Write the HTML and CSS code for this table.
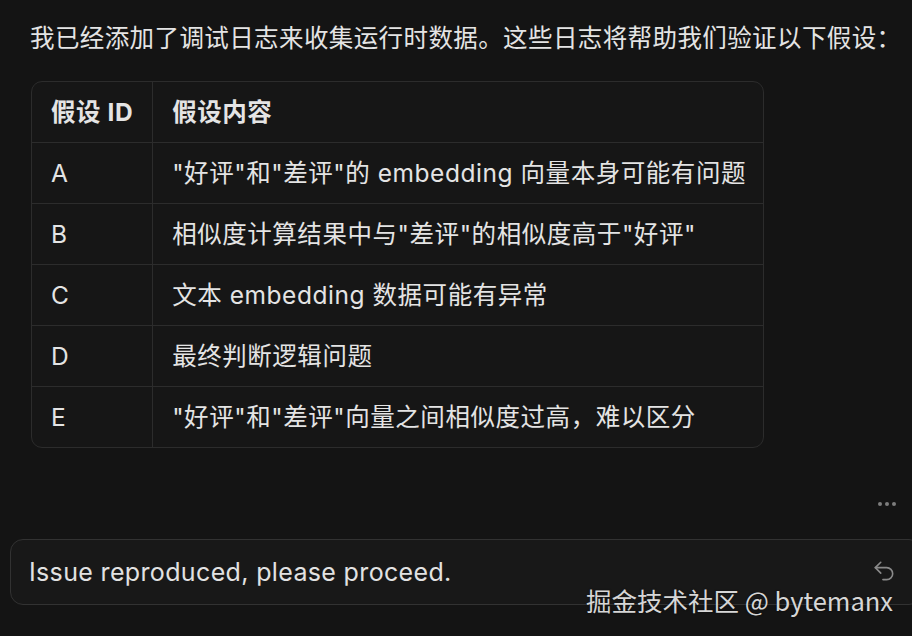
FILE: index.html
```html
<!DOCTYPE html>
<html lang="zh-CN">
<head>
<meta charset="utf-8">
<title>调试日志</title>
<link rel="stylesheet" href="styles.css">
</head>
<body>
<main class="chat">
  <p class="intro">我已经添加了调试日志来收集运行时数据。这些日志将帮助我们验证以下假设：</p>
  <div class="table-wrap">
    <table class="hyp">
      <thead>
        <tr><th class="c-id">假设 ID</th><th class="c-txt">假设内容</th></tr>
      </thead>
      <tbody>
        <tr><td class="c-id">A</td><td class="c-txt">"好评"和"差评"的 embedding 向量本身可能有问题</td></tr>
        <tr><td class="c-id">B</td><td class="c-txt">相似度计算结果中与"差评"的相似度高于"好评"</td></tr>
        <tr><td class="c-id">C</td><td class="c-txt">文本 embedding 数据可能有异常</td></tr>
        <tr><td class="c-id">D</td><td class="c-txt">最终判断逻辑问题</td></tr>
        <tr><td class="c-id">E</td><td class="c-txt">"好评"和"差评"向量之间相似度过高，难以区分</td></tr>
      </tbody>
    </table>
  </div>
  <div class="more"><span class="dot"></span><span class="dot"></span><span class="dot"></span></div>
  <div class="composer">
    <span class="composer-text">Issue reproduced, please proceed.</span>
    <svg class="undo" viewBox="0 0 24 24" width="26" height="26" fill="none" stroke="currentColor" stroke-width="1.5" stroke-linecap="round" stroke-linejoin="round"><path d="M9 13 4 8l5-5"/><path d="M4 8h10.5a5.5 5.5 0 0 1 0 11H11"/></svg>
  </div>
  <div class="watermark">掘金技术社区 @ bytemanx</div>
</main>
</body>
</html>
```
FILE: styles.css
```css
html, body {
  margin: 0;
  padding: 0;
  background: #141414;
  overflow: hidden;
}
body {
  width: 912px;
  height: 636px;
  font-family: "Inter", "Noto Sans CJK SC", sans-serif;
  color: #e4e4e4;
}
.chat {
  position: relative;
  height: 636px;
  padding: 20px 0 0 30px;
  box-sizing: border-box;
  display: flex;
  flex-direction: column;
  align-items: flex-start;
}
.intro {
  margin: 0;
  font-size: 24.5px;
  line-height: 36px;
  letter-spacing: 0.4px;
  white-space: nowrap;
}
.table-wrap {
  margin-top: 25px;
  margin-left: 1px;
  width: 733px;
  box-sizing: border-box;
  border: 1px solid #2c2c2c;
  border-radius: 11px;
  overflow: hidden;
  background: #161616;
}
.hyp {
  width: 100%;
  border-collapse: separate;
  border-spacing: 0;
  font-size: 24.5px;
  line-height: 36px;
  letter-spacing: 0.55px;
}
.hyp th, .hyp td {
  padding: 12px 19px;
  text-align: left;
  border-bottom: 1px solid #2c2c2c;
  white-space: nowrap;
}
.hyp tbody tr:last-child td {
  border-bottom: none;
}
.hyp th {
  font-weight: 700;
}
.hyp td {
  font-weight: 400;
}
.c-id {
  width: 83px;
}
.c-txt {
  border-left: 1px solid #2c2c2c;
}
.more {
  align-self: stretch;
  display: flex;
  justify-content: flex-end;
  gap: 3px;
  padding-right: 16px;
  margin-top: 54px;
  height: 4px;
}
.dot {
  width: 4px;
  height: 4px;
  border-radius: 50%;
  background: #7d7d7d;
}
.composer {
  margin-top: 33px;
  margin-left: -20px;
  width: 912px;
  height: 66px;
  box-sizing: border-box;
  border: 1px solid #323232;
  border-radius: 13px;
  background: #181818;
  display: flex;
  align-items: center;
  justify-content: space-between;
  padding: 0 16px 0 18px;
}
.composer-text {
  font-size: 25px;
  letter-spacing: 0.35px;
  color: #e2e2e2;
}
.undo {
  color: #8a8a8a;
  margin-right: 8px;
}
.watermark {
  position: absolute;
  left: 586px;
  top: 583px;
  font-family: "Noto Sans CJK SC", sans-serif;
  font-size: 25.5px;
  line-height: 34px;
  color: #d6d6d6;
  white-space: nowrap;
  text-shadow: 0 0 2px rgba(0,0,0,0.5);
}
```
